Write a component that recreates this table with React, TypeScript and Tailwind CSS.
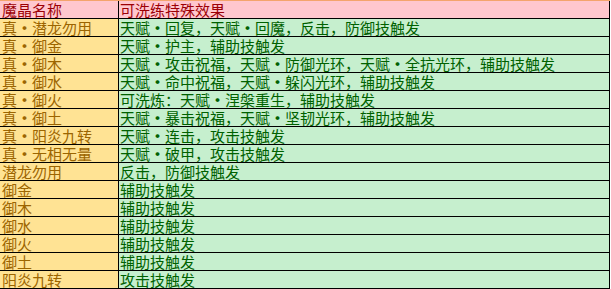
const rows: [string, string][] = [
  ["真•潜龙勿用", "天赋•回复，天赋•回魔，反击，防御技触发"],
  ["真•御金", "天赋•护主，辅助技触发"],
  ["真•御木", "天赋•攻击祝福，天赋•防御光环，天赋•全抗光环，辅助技触发"],
  ["真•御水", "天赋•命中祝福，天赋•躲闪光环，辅助技触发"],
  ["真•御火", "可洗炼：天赋•涅槃重生，辅助技触发"],
  ["真•御土", "天赋•暴击祝福，天赋•坚韧光环，辅助技触发"],
  ["真•阳炎九转", "天赋•连击，攻击技触发"],
  ["真•无相无量", "天赋•破甲，攻击技触发"],
  ["潜龙勿用", "反击，防御技触发"],
  ["御金", "辅助技触发"],
  ["御木", "辅助技触发"],
  ["御水", "辅助技触发"],
  ["御火", "辅助技触发"],
  ["御土", "辅助技触发"],
  ["阳炎九转", "攻击技触发"],
];

// full-width dot like the old spreadsheet font
function Cell({ text }: { text: string }) {
  const parts = text.split("•");
  return (
    <>
      {parts.map((p, i) => (
        <span key={i}>
          {i > 0 && <span className="inline-block w-[15px] text-center font-bold">•</span>}
          {p}
        </span>
      ))}
    </>
  );
}

export default function App() {
  return (
    <div className="w-[611px] h-[289px] bg-white">
      <div
        className="w-[610px] border-t border-[#f4a46c] text-[15px] leading-[17px]"
        style={{ fontFamily: '"Noto Sans CJK SC", "Noto Sans", sans-serif' }}
      >
        <div className="flex h-[18px] border-b border-black bg-[#ffc7ce] text-[#9c0006]">
          <div className="w-[118px] pl-[2px] whitespace-nowrap">魔晶名称</div>
          <div className="flex-1 border-l border-r border-black pl-[1px] whitespace-nowrap">可洗练特殊效果</div>
        </div>
        {rows.map(([name, effect]) => (
          <div key={name} className="flex h-[18px] border-b border-black">
            <div className="w-[118px] pl-[2px] bg-[#ffe394] text-[#9c6500] whitespace-nowrap">
              <Cell text={name} />
            </div>
            <div className="flex-1 border-l border-r border-black bg-[#c6efce] text-[#006100] pl-[1px] whitespace-nowrap">
              <Cell text={effect} />
            </div>
          </div>
        ))}
      </div>
    </div>
  );
}
